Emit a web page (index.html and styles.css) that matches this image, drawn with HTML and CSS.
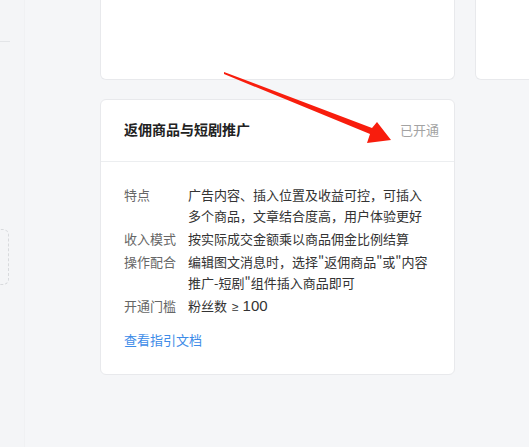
FILE: index.html
```html
<!DOCTYPE html>
<html lang="zh-CN">
<head>
<meta charset="utf-8">
<link rel="stylesheet" href="styles.css">
</head>
<body>
<div class="page">
  <aside class="side">
    <div class="side-rule"></div>
    <div class="side-dash"></div>
  </aside>
  <main class="main">
    <div class="grid">
      <div class="card card-top"></div>
      <div class="card card-top"></div>
      <section class="card feature">
        <header class="feature-head">
          <h3 class="feature-title">返佣商品与短剧推广</h3>
          <span class="feature-status">已开通</span>
        </header>
        <div class="feature-body">
          <dl class="info">
            <div class="info-row"><dt>特点</dt><dd>广告内容、插入位置及收益可控，可插入多个商品，文章结合度高，用户体验更好</dd></div>
            <div class="info-row"><dt>收入模式</dt><dd>按实际成交金额乘以商品佣金比例结算</dd></div>
            <div class="info-row"><dt>操作配合</dt><dd>编辑图文消息时，选择"返佣商品"或"内容推广-短剧"组件插入商品即可</dd></div>
            <div class="info-row"><dt>开通门槛</dt><dd>粉丝数<span class="ge">≥</span><span class="num">100</span></dd></div>
          </dl>
          <a class="guide-link" href="#">查看指引文档</a>
        </div>
      </section>
    </div>
  </main>
  <svg class="arrow" width="529" height="447" viewBox="0 0 529 447" aria-hidden="true">
    <polygon points="224,72 372,128 377,122 391,140 367,143 370,134 224,74" fill="#f81d0d"/>
  </svg>
</div>
</body>
</html>
```
FILE: styles.css
```css
* { box-sizing: border-box; }
html, body { margin: 0; padding: 0; }
body {
  width: 529px;
  height: 447px;
  overflow: hidden;
  background: #f5f6f8;
  font-family: "Noto Sans CJK SC", "Noto Sans", sans-serif;
  color: #333;
}
.page {
  position: relative;
  display: flex;
  height: 447px;
}
.side {
  width: 25px;
  flex: none;
  background: #f4f5f7;
  border-right: 1px solid #f0f1f3;
  padding-top: 41px;
}
.side-rule {
  width: 10px;
  height: 1px;
  background: #e3e5e8;
}
.side-dash {
  margin-top: 187px;
  margin-left: -20px;
  width: 29px;
  height: 56px;
  border: 1px dashed #d8dadd;
  border-radius: 6px;
}
.main {
  flex: 1;
  padding-left: 75px;
  overflow: hidden;
}
.grid {
  display: grid;
  grid-template-columns: 355px 355px;
  column-gap: 20px;
  row-gap: 19px;
}
.card {
  background: #fff;
  border: 1px solid #e8e9ec;
  border-radius: 6px;
}
.card-top {
  height: 80px;
  border-top: none;
  border-radius: 0 0 6px 6px;
}
.feature {
  height: 276px;
}
.feature-head {
  height: 62px;
  display: flex;
  align-items: center;
  justify-content: space-between;
  padding: 0 15px 3px 23px;
  border-bottom: 1px solid #eceef0;
}
.feature-title {
  margin: 0;
  font-size: 14px;
  font-weight: 700;
  color: #222;
}
.feature-status {
  font-size: 13px;
  color: #a3a3a3;
}
.feature-body {
  padding: 22px 23px 0;
  font-size: 13px;
  line-height: 21px;
}
.info {
  margin: 0;
  display: flex;
  flex-direction: column;
  gap: 2px;
}
.info-row {
  display: flex;
}
.info-row dt {
  width: 64px;
  flex: none;
  color: #666;
}
.info-row dd {
  margin: 0;
  width: 240px;
  color: #333;
}
.ge {
  font-family: "Liberation Sans", Arial, sans-serif;
  font-size: 12px;
  margin: 0 4px 0 5px;
}
.num {
  font-family: "Liberation Sans", Arial, sans-serif;
  font-size: 15px;
}
.guide-link {
  display: inline-block;
  margin-top: 11px;
  color: #3d8ce8;
  text-decoration: none;
}
.arrow {
  position: absolute;
  left: 0;
  top: 0;
  pointer-events: none;
}
```
